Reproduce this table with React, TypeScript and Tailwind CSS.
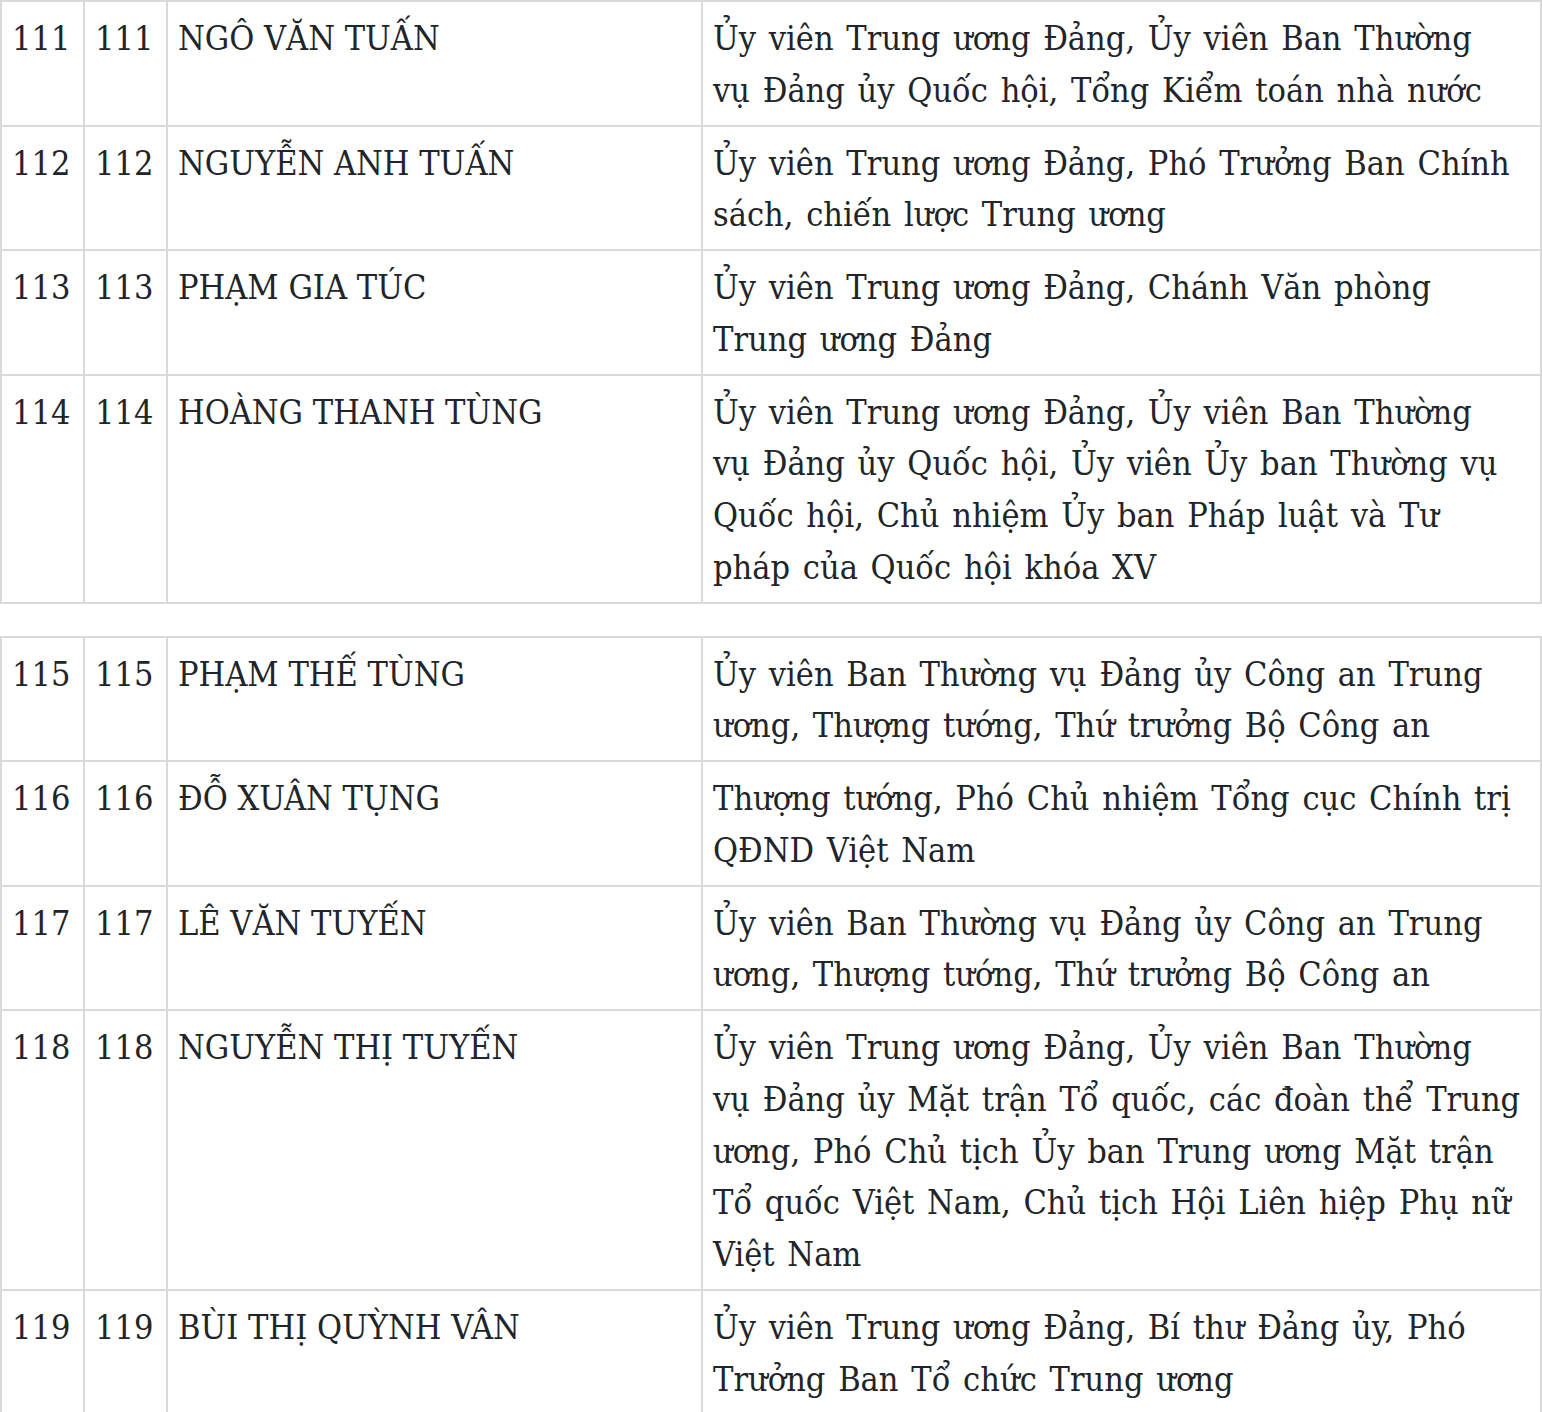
type Row = { stt: string; no: string; name: string; lines: string[] };

const groupA: Row[] = [
  {
    stt: '111',
    no: '111',
    name: 'NGÔ VĂN TUẤN',
    lines: ['Ủy viên Trung ương Đảng, Ủy viên Ban Thường', 'vụ Đảng ủy Quốc hội, Tổng Kiểm toán nhà nước'],
  },
  {
    stt: '112',
    no: '112',
    name: 'NGUYỄN ANH TUẤN',
    lines: ['Ủy viên Trung ương Đảng, Phó Trưởng Ban Chính', 'sách, chiến lược Trung ương'],
  },
  {
    stt: '113',
    no: '113',
    name: 'PHẠM GIA TÚC',
    lines: ['Ủy viên Trung ương Đảng, Chánh Văn phòng', 'Trung ương Đảng'],
  },
  {
    stt: '114',
    no: '114',
    name: 'HOÀNG THANH TÙNG',
    lines: [
      'Ủy viên Trung ương Đảng, Ủy viên Ban Thường',
      'vụ Đảng ủy Quốc hội, Ủy viên Ủy ban Thường vụ',
      'Quốc hội, Chủ nhiệm Ủy ban Pháp luật và Tư',
      'pháp của Quốc hội khóa XV',
    ],
  },
];

const groupB: Row[] = [
  {
    stt: '115',
    no: '115',
    name: 'PHẠM THẾ TÙNG',
    lines: ['Ủy viên Ban Thường vụ Đảng ủy Công an Trung', 'ương, Thượng tướng, Thứ trưởng Bộ Công an'],
  },
  {
    stt: '116',
    no: '116',
    name: 'ĐỖ XUÂN TỤNG',
    lines: ['Thượng tướng, Phó Chủ nhiệm Tổng cục Chính trị', 'QĐND Việt Nam'],
  },
  {
    stt: '117',
    no: '117',
    name: 'LÊ VĂN TUYẾN',
    lines: ['Ủy viên Ban Thường vụ Đảng ủy Công an Trung', 'ương, Thượng tướng, Thứ trưởng Bộ Công an'],
  },
  {
    stt: '118',
    no: '118',
    name: 'NGUYỄN THỊ TUYẾN',
    lines: [
      'Ủy viên Trung ương Đảng, Ủy viên Ban Thường',
      'vụ Đảng ủy Mặt trận Tổ quốc, các đoàn thể Trung',
      'ương, Phó Chủ tịch Ủy ban Trung ương Mặt trận',
      'Tổ quốc Việt Nam, Chủ tịch Hội Liên hiệp Phụ nữ',
      'Việt Nam',
    ],
  },
  {
    stt: '119',
    no: '119',
    name: 'BÙI THỊ QUỲNH VÂN',
    lines: ['Ủy viên Trung ương Đảng, Bí thư Đảng ủy, Phó', 'Trưởng Ban Tổ chức Trung ương'],
  },
];

function MemberTable({ rows }: { rows: Row[] }) {
  return (
    <table className="w-[1540px] table-fixed border-collapse">
      <colgroup>
        <col className="w-[83px]" />
        <col className="w-[83px]" />
        <col className="w-[535px]" />
        <col className="w-[839px]" />
      </colgroup>
      <tbody>
        {rows.map((r) => (
          <tr key={r.stt}>
            <td className="border-2 border-[#d9d9d9] px-[10px] pt-[11px] pb-[8px] align-top">{r.stt}</td>
            <td className="border-2 border-[#d9d9d9] px-[10px] pt-[11px] pb-[8px] align-top">{r.no}</td>
            <td className="border-2 border-[#d9d9d9] px-[10px] pt-[11px] pb-[8px] align-top">{r.name}</td>
            <td className="border-2 border-[#d9d9d9] px-[10px] pt-[11px] pb-[8px] align-top whitespace-nowrap [word-spacing:3px]">
              {r.lines.map((l, i) => (
                <span key={i} className="block">
                  {l}
                </span>
              ))}
            </td>
          </tr>
        ))}
      </tbody>
    </table>
  );
}

export default function App() {
  return (
    <div className="min-h-[1412px] bg-white text-[#212529] text-[34px] leading-[51.75px] [font-family:'DejaVu_Serif_Condensed','DejaVu_Serif',serif]">
      <MemberTable rows={groupA} />
      <div className="h-[32px]" />
      <MemberTable rows={groupB} />
    </div>
  );
}
